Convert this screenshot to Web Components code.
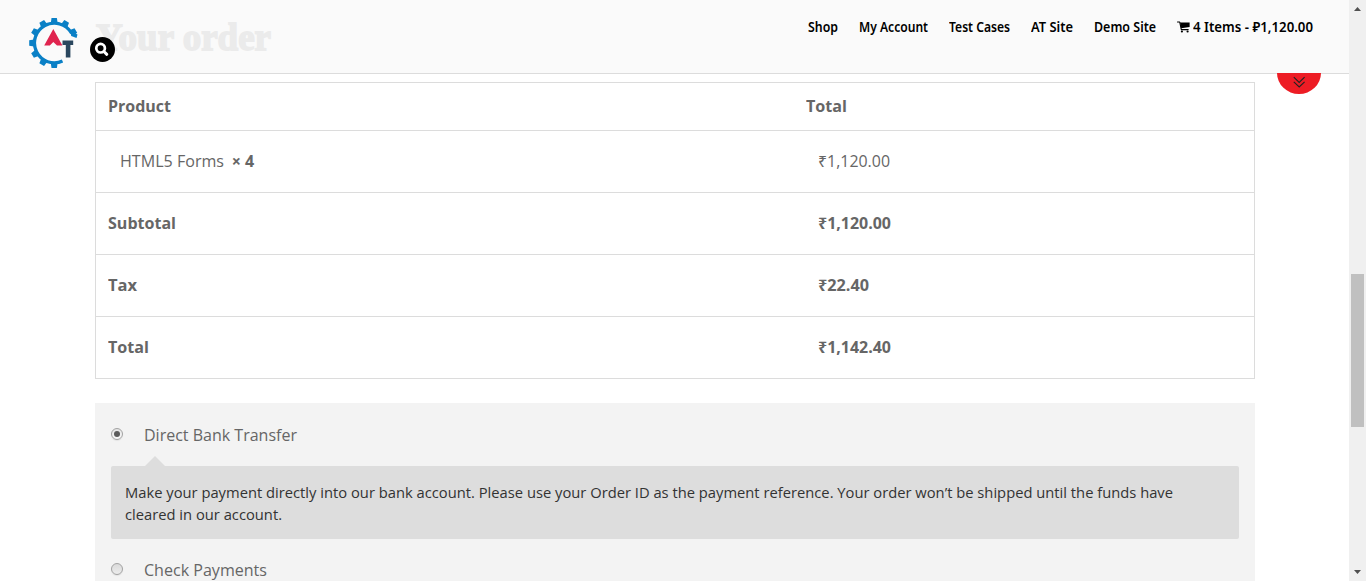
<!DOCTYPE html>
<html lang="en">
<head>
<meta charset="utf-8">
<title>Checkout</title>
<style>
html,body{margin:0;height:100%;overflow:hidden;background:#fff}
body{font-family:"Open Sans","Noto Sans",sans-serif}
</style>
</head>
<body>
<checkout-page></checkout-page>
<script>
const define = (name, html, ready) => customElements.define(name, class extends HTMLElement {
  connectedCallback() {
    if (this.shadowRoot) return;
    const t = document.createElement('template');
    t.innerHTML = html;
    this.attachShadow({mode: 'open'}).append(t.content.cloneNode(true));
    if (ready) ready(this, this.shadowRoot);
  }
});

// Text squeezed or stretched horizontally to the width given in "w".
define('fit-text', `<style>:host{display:inline-block;white-space:pre}span{display:inline-block;transform-origin:0 50%}</style><span><slot></slot></span>`,
  (el, root) => {
    const s = root.querySelector('span'), w = +el.getAttribute('w');
    el.style.width = w + 'px';
    s.style.transform = `scaleX(${w / s.getBoundingClientRect().width})`;
  });

const teeth = [-180,-150,-120,-90,-60,-30,0,30,60].map(a => `<path d="M-3.4 -20 L-2.7 -25 H2.7 L3.4 -20Z" transform="rotate(${a})"/>`).join('');
define('site-logo', `<style>:host{display:block;width:52px;height:52px}svg{display:block}</style>
<svg width="52" height="52" viewBox="28 17 52 52">
<g transform="translate(54.2 43)" fill="#0a80c6"><path d="M20.1 -7.4 A21.4 21.4 0 1 0 9 19.4 L7.6 16.6 A18.2 18.2 0 1 1 15.8 -9.2Z"/>${teeth}<path d="M16 -12 L23.3 -8.6 L22.3 -5 L17 -7Z"/></g>
<path d="M53.3 29 L62.4 45.5 H57 L53.3 42 L49.8 45.5 H44.2Z" fill="#e0244f"/>
<path d="M62.5 40.5 H73.2 V45 H70.4 V57.5 H65.8 V45 H62.5Z" fill="#2a475e"/>
</svg>`);

define('search-button', `<style>:host{display:block;width:25px;height:25px}svg{display:block}</style>
<svg width="25" height="25"><circle cx="12.5" cy="12.5" r="12.5"/><circle cx="10.6" cy="11.2" r="4.3" fill="none" stroke="#fff" stroke-width="2.7"/><path d="M13.9 14.5 L16.8 17.3" stroke="#fff" stroke-width="3" stroke-linecap="round"/></svg>`);

define('cart-icon', `<style>:host{display:block;width:13px;height:12px;margin-right:3px}svg{display:block}</style>
<svg width="13" height="12" viewBox="0 0 13 12"><path d="M.5 1 H2.7 L4.3 8.6 H11.2" fill="none" stroke="#000" stroke-width="1.1" stroke-linecap="round" stroke-linejoin="round"/><path d="M3 1.5 H12.6 V6 L4.2 7.2Z"/><circle cx="4.9" cy="10.5" r="1.1"/><circle cx="10.6" cy="10.5" r="1.1"/></svg>`);

define('site-header', `<style>
:host{display:flex;justify-content:space-between;align-items:flex-start;box-sizing:border-box;height:74px;background:rgba(250,250,250,.93);border-bottom:1px solid #dcdcdc}
.brand{display:flex;padding:17px 0 0 28px;gap:10px}
search-button{margin-top:20px}
nav{display:flex;gap:21px;padding:17px 36px 0 0;font:600 13.7px/20px "Noto Sans","Open Sans",sans-serif;color:#000}
.cart{display:flex;align-items:center}
</style>
<div class="brand"><site-logo></site-logo><search-button></search-button></div>
<nav><fit-text w="30">Shop</fit-text><fit-text w="69">My Account</fit-text><fit-text w="61">Test Cases</fit-text><fit-text w="42">AT Site</fit-text><fit-text w="62">Demo Site</fit-text><div class="cart"><cart-icon></cart-icon><fit-text w="120">4 Items - ₽1,120.00</fit-text></div></nav>`);

define('jump-tab', `<style>:host{display:flex;justify-content:center;width:44px;height:21px;background:#ed1c24;border-radius:0 0 22px 22px/0 0 21px 21px}</style>
<svg width="44" height="21" fill="none" stroke="#222" stroke-width="1.1"><path d="M16.8 4.2 L22.2 9.4 L27.6 4.2 M16.8 8.8 L22.2 14 L27.6 8.8"/></svg>`);

define('order-row', `<style>
:host{display:grid;grid-template-columns:698px 1fr;align-items:center;box-sizing:border-box;height:62px;border-top:1px solid #dcdcdc;padding:0 0 2px 11.5px;font-weight:700}
:host([head]){height:47px;border-top:0}
:host([item]){font-weight:400}
:host([item]) .a{padding-left:12px}
.b{padding-left:12px}
:host([head]) .b{padding-left:0}
</style><div class="a"><slot name="label"></slot></div><div class="b"><slot></slot></div>`);

define('order-table', `<style>
:host{display:block;border:1px solid #dcdcdc;font-size:16px;line-height:24px;color:#666}
b{margin-left:4px}
</style>
<order-row head><fit-text w="63" slot="label">Product</fit-text><fit-text w="41">Total</fit-text></order-row>
<order-row item><span slot="label"><fit-text w="104">HTML5 Forms</fit-text> <b>× 4</b></span><fit-text w="72">₹1,120.00</fit-text></order-row>
<order-row><fit-text w="68" slot="label">Subtotal</fit-text><fit-text w="73">₹1,120.00</fit-text></order-row>
<order-row><fit-text w="29" slot="label">Tax</fit-text><fit-text w="51">₹22.40</fit-text></order-row>
<order-row><fit-text w="41" slot="label">Total</fit-text><fit-text w="73">₹1,142.40</fit-text></order-row>`);

define('radio-option', `<style>
:host{display:flex;align-items:center;height:24px;gap:20.6px;font-size:16px;line-height:24px;color:#666}
i{box-sizing:border-box;width:12px;height:12px;border-radius:50%;border:1px solid #a2a2a2;background:linear-gradient(#dadada,#ececec);display:grid;place-items:center;margin-top:-2px;box-shadow:0 1px 1px #0001}
:host([checked]) i{background:linear-gradient(#e4e4e4,#fafafa)}
:host([checked]) i::after{content:"";width:6px;height:6px;border-radius:50%;background:#5c5c5c}
</style><i></i><slot></slot>`);

define('payment-box', `<style>
:host{display:block;background:#f3f3f3;padding:20px 16px 0;height:178px;box-sizing:border-box;overflow:hidden}
.tip{width:0;height:0;border:10px solid transparent;border-top:0;border-bottom-color:#ddd;margin:9px 0 0 33.5px}
.note{box-sizing:border-box;height:73px;background:#ddd;border-radius:2px;padding:15px 14px;font-size:14.72px;line-height:22px;color:#333;margin-bottom:19px}
fit-text{display:block}
</style>
<radio-option checked><fit-text w="153">Direct Bank Transfer</fit-text></radio-option>
<div class="tip"></div>
<div class="note"><fit-text w="1048">Make your payment directly into our bank account. Please use your Order ID as the payment reference. Your order won’t be shipped until the funds have</fit-text><fit-text w="157">cleared in our account.</fit-text></div>
<radio-option><fit-text w="123">Check Payments</fit-text></radio-option>`);

define('scroll-bar', `<style>
:host{display:flex;flex-direction:column;justify-content:space-between;width:17px;height:581px;background:#f0f0f0;box-sizing:border-box}
.thumb{width:13px;height:153px;margin:274px 0 0 2px;background:#c0c0c0}
svg{display:block}
.up{position:absolute}
</style><svg class="up" width="17" height="17" fill="#505050"><path d="M5 11 L8.5 7 L12 11Z"/></svg><div class="thumb"></div><svg width="17" height="17" fill="#505050"><path d="M5 6 L8.5 10 L12 6Z"/></svg>`);

define('checkout-page', `<style>
:host{display:flex;height:581px;position:relative}
main{width:1349px;padding:0 94px 0 95px;box-sizing:border-box}
h3{margin:0;height:82px;padding:13px 0 0 1px;box-sizing:border-box;font:bold 38px/48px "Liberation Serif",serif;color:#333;-webkit-text-stroke:1.8px #333}
payment-box{margin-top:24px}
site-header{position:absolute;top:0;left:0;width:1349px}
jump-tab{position:absolute;top:73px;left:1277px}
scroll-bar{width:17px}
</style>
<main><h3><fit-text w="175">Your order</fit-text></h3><order-table></order-table><payment-box></payment-box></main>
<site-header></site-header><jump-tab></jump-tab><scroll-bar></scroll-bar>`);
</script>
</body>
</html>
